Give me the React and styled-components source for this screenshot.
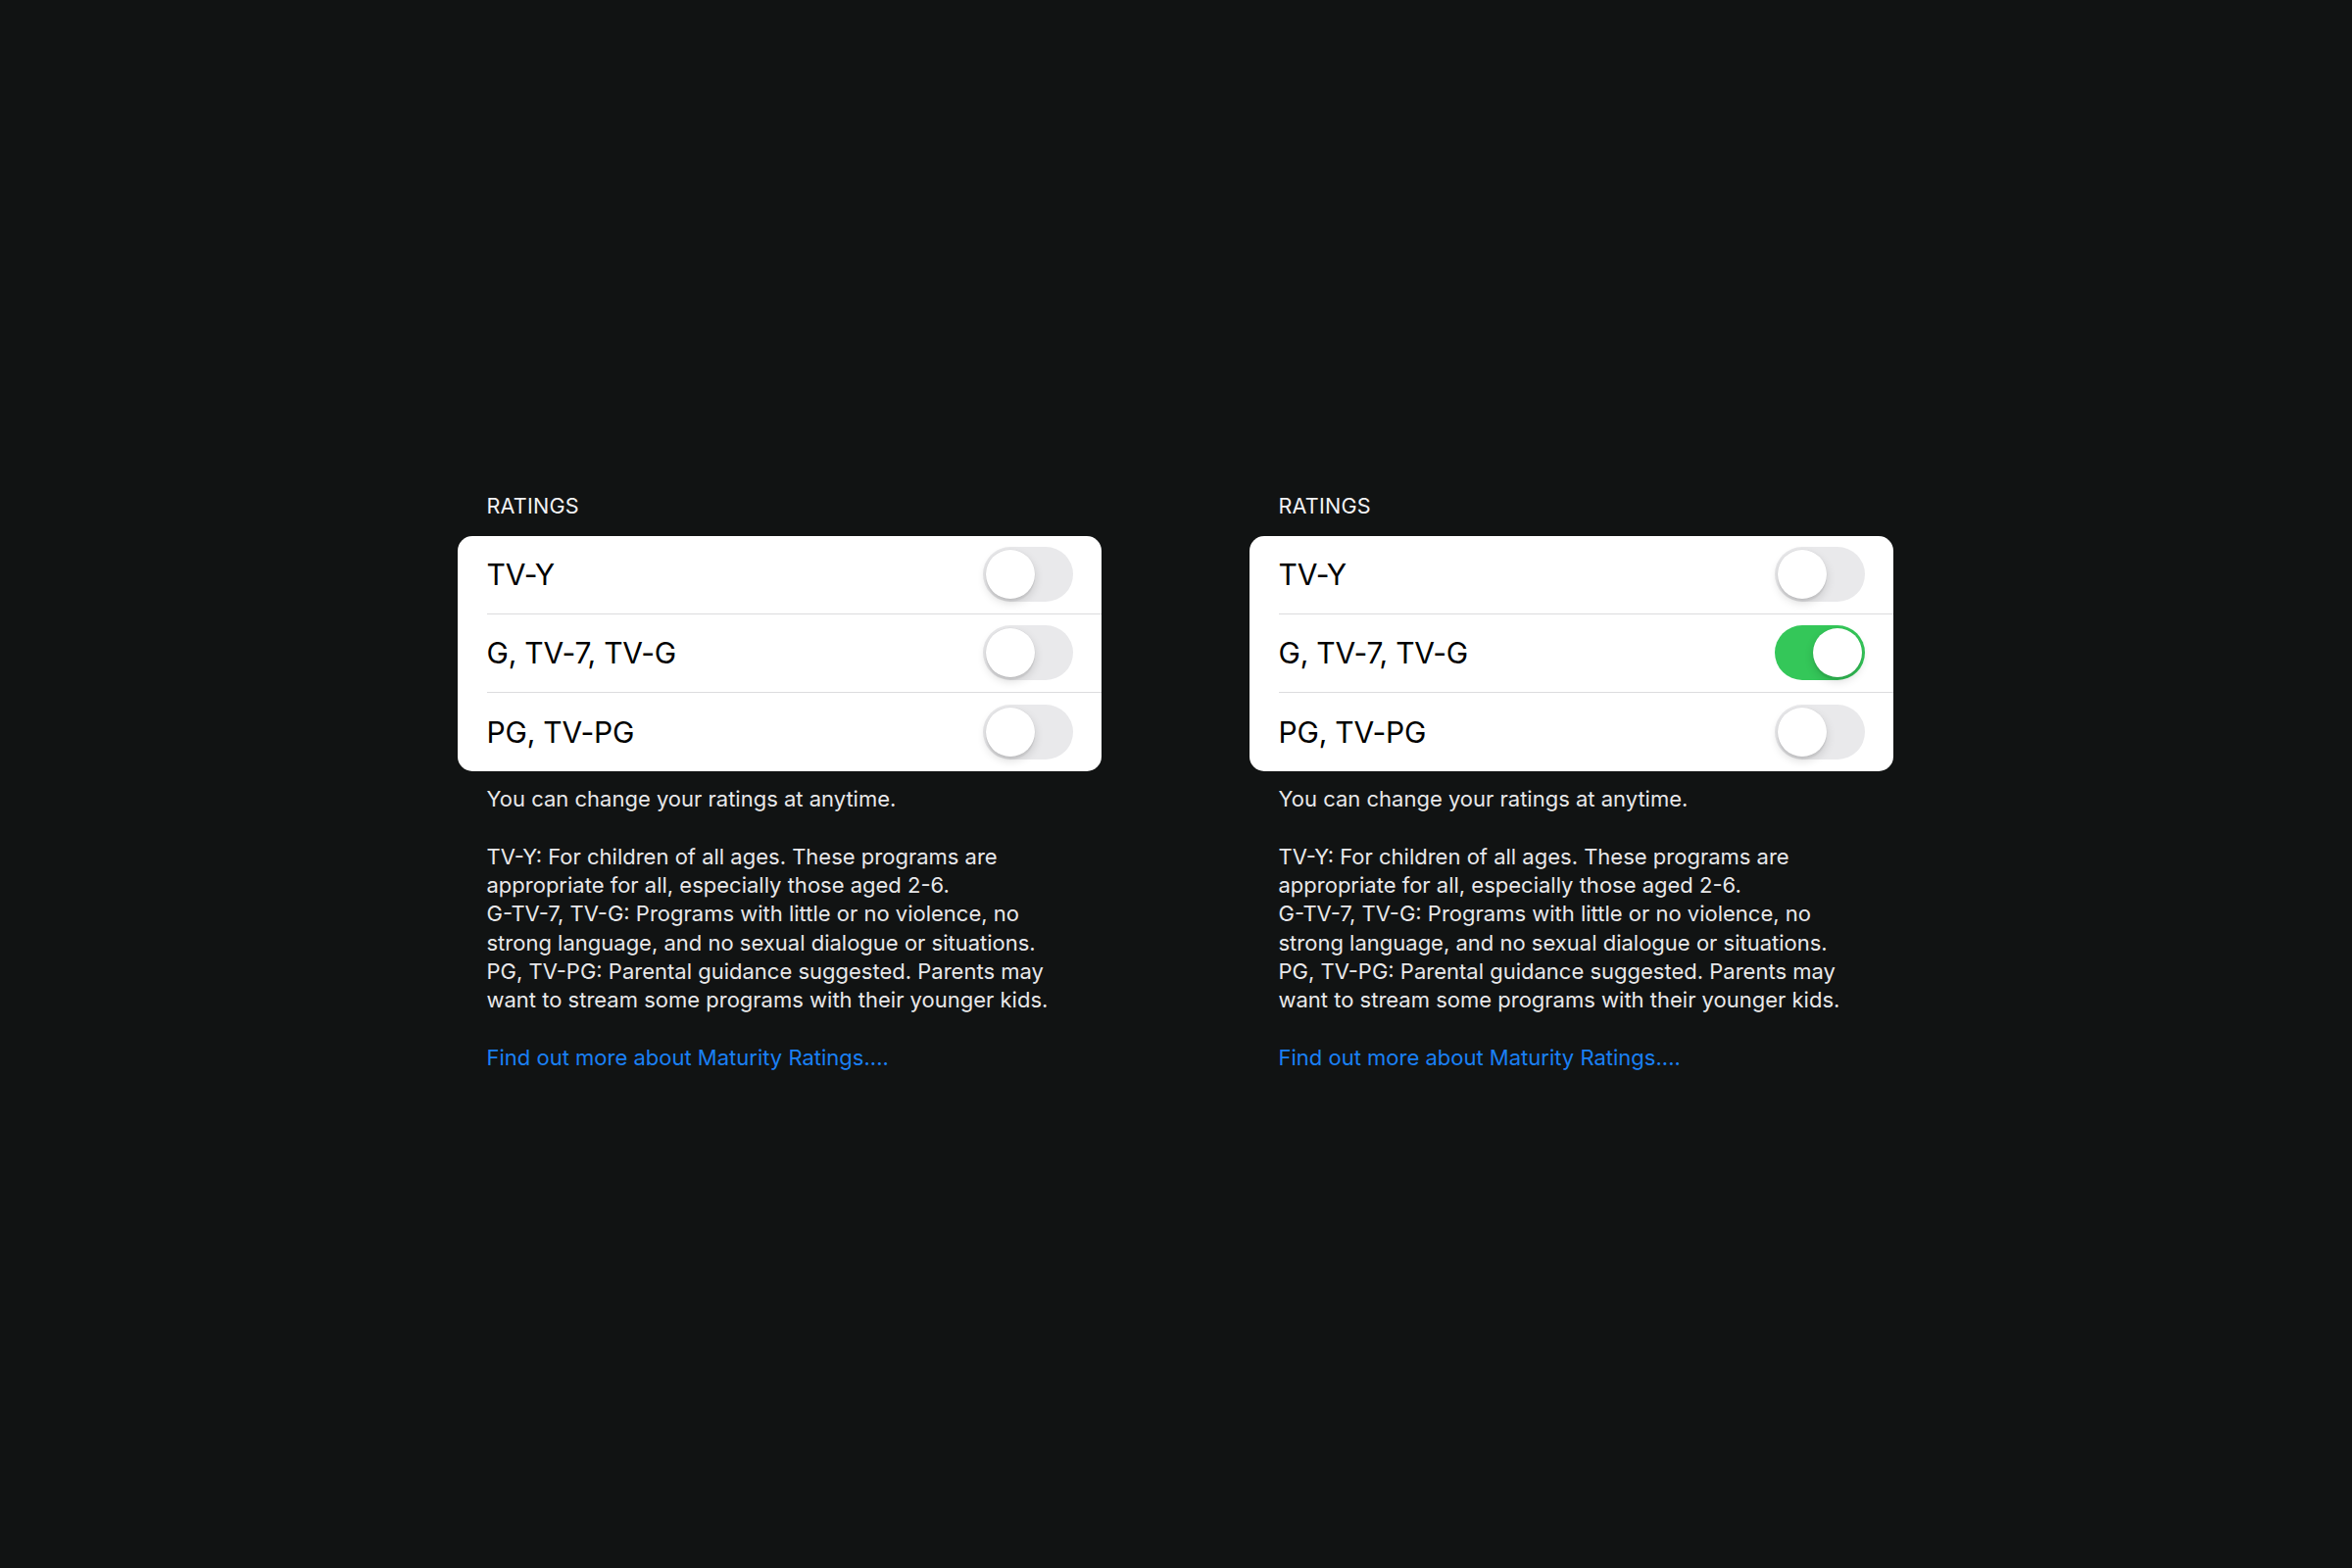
import React from 'react';
import styled, { createGlobalStyle } from 'styled-components';

const GlobalStyle = createGlobalStyle`
  html, body {
    margin: 0;
    padding: 0;
    background: #111313;
  }
  body {
    font-family: Inter, "Noto Sans", "Liberation Sans", sans-serif;
    -webkit-font-smoothing: antialiased;
  }
`

const ratings = ['TV-Y', 'G, TV-7, TV-G', 'PG, TV-PG'];

const description = `TV-Y: For children of all ages. These programs are
appropriate for all, especially those aged 2-6.
G-TV-7, TV-G: Programs with little or no violence, no
strong language, and no sexual dialogue or situations.
PG, TV-PG: Parental guidance suggested. Parents may
want to stream some programs with their younger kids.`

const Toggle = ({on}) => {
  return (
    <Track on={on ? 1 : 0}>
      <Knob on={on ? 1 : 0}/>
    </Track>
  )
}

const RatingsPanel = ({activeIndex}) => {
  return (
    <Panel>
      <Header>RATINGS</Header>
      <Card>
        {ratings.map((label, i) => (
          <Row key={label} last={i === ratings.length - 1 ? 1 : 0}>
            <Label>{label}</Label>
            <Toggle on={i === activeIndex}/>
          </Row>
        ))}
      </Card>
      <Footer>
        <Note>You can change your ratings at anytime.</Note>
        <Note>{description}</Note>
        <Link href="#">Find out more about Maturity Ratings....</Link>
      </Footer>
    </Panel>
  )
}

const App = () => {
  return (
    <>
      <GlobalStyle/>
      <Page>
        <RatingsPanel activeIndex={-1}/>
        <RatingsPanel activeIndex={1}/>
      </Page>
    </>
  )
}

const Page = styled.div`
  width: 100%;
  height: 1600px;
  box-sizing: border-box;
  padding-right: 2px;
  padding-bottom: 3px;
  display: flex;
  flex-direction: row;
  align-items: center;
  justify-content: center;
  gap: 151px;
`

const Panel = styled.div`
  width: 657px;
  display: flex;
  flex-direction: column;
`

const Header = styled.div`
  color: #f2f2f4;
  font-size: 21.6px;
  line-height: 26px;
  letter-spacing: 0.2px;
  padding-left: 30px;
  margin-bottom: 17.5px;
`

const Card = styled.div`
  background: #ffffff;
  border-radius: 15px;
  overflow: hidden;
  display: flex;
  flex-direction: column;
`

const Row = styled.div`
  box-sizing: border-box;
  height: 80px;
  margin-left: 30px;
  padding-right: 29px;
  display: flex;
  align-items: center;
  justify-content: space-between;
  border-bottom: ${props => props.last ? 'none' : '1px solid #dcdcde'};
`

const Label = styled.span`
  color: #000000;
  font-size: 30px;
  letter-spacing: -0.2px;
`

const Track = styled.div`
  position: relative;
  width: 92px;
  height: 56px;
  border-radius: 28px;
  background: ${props => props.on ? '#34c759' : '#e9e9eb'};
`

const Knob = styled.div`
  position: absolute;
  top: 3px;
  left: ${props => props.on ? '39px' : '3px'};
  width: 50px;
  height: 50px;
  border-radius: 50%;
  background: #ffffff;
  box-shadow: 0 4px 10px rgba(0, 0, 0, 0.15), 0 3px 1px rgba(0, 0, 0, 0.06), 0 0 0 0.5px rgba(0, 0, 0, 0.04);
`

const Footer = styled.div`
  margin-top: 14.5px;
  padding: 0 30px;
  display: flex;
  flex-direction: column;
  gap: 29.3px;
`

const Note = styled.p`
  margin: 0;
  color: #e8e8ea;
  font-size: 22px;
  line-height: 29.3px;
  white-space: pre-line;
`

const Link = styled.a`
  color: #1a80f5;
  font-size: 22px;
  line-height: 29.3px;
  text-decoration: none;
`

export default App
